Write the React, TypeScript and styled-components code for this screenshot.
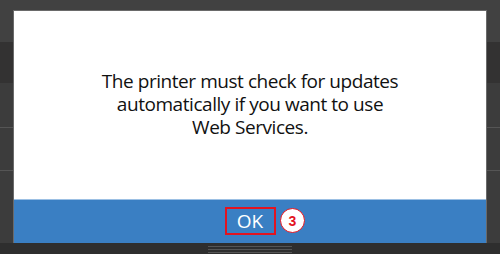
import React from "react";
import styled, { createGlobalStyle } from "styled-components";

const Global = createGlobalStyle`
  html, body { margin: 0; padding: 0; }
  body { width: 500px; height: 254px; overflow: hidden; background: #424242; font-family: "Open Sans", "Noto Sans", sans-serif; }
`;

const Screen = styled.div`
  position: relative;
  width: 500px;
  height: 254px;
  display: flex;
  flex-direction: column;
  background: #3d3d3d;
`;

const Band = styled.div<{ $h: number; $bg: string; $line?: boolean }>`
  height: ${(p) => p.$h}px;
  background: ${(p) => p.$bg};
  border-bottom: ${(p) => (p.$line ? "1px solid #555" : "none")};
  box-sizing: border-box;
`;

const Footer = styled.div`
  flex: 1;
  background: #2e2e2e;
  display: flex;
  justify-content: center;
  padding-top: 3px;
`;

const Grip = styled.div`
  width: 84px;
  display: flex;
  flex-direction: column;
  gap: 2px;
  span { height: 1px; background: #555; }
`;

const Dialog = styled.div`
  position: absolute;
  left: 13px;
  top: 10px;
  width: 474px;
  height: 233px;
  box-sizing: border-box;
  border: 1px solid #6a6a6a;
  border-bottom: none;
  display: flex;
  flex-direction: column;
  background: #fff;
`;

const Body = styled.div`
  flex: 1;
  display: flex;
  justify-content: center;
  padding-top: 59px;
  box-sizing: border-box;
`;

const Message = styled.p`
  margin: 0;
  text-align: center;
  color: #111;
  font-size: 19px;
  line-height: 23px;
  letter-spacing: -0.45px;
`;

const ActionBar = styled.div`
  height: 43px;
  background: #3a7fc3;
  border-top: 1px solid #9cc0e4;
  display: flex;
  justify-content: center;
  align-items: center;
  position: relative;
`;

const OkButton = styled.button`
  width: 51px;
  height: 28px;
  margin-top: -1px;
  box-sizing: border-box;
  border: 2px solid #e3141f;
  background: transparent;
  color: #fff;
  font-family: "Open Sans", "Noto Sans", sans-serif;
  font-size: 19px;
  padding: 0;
  display: flex;
  align-items: center;
  justify-content: center;
`;

const Badge = styled.div`
  position: absolute;
  left: 266px;
  top: 8px;
  width: 25px;
  height: 25px;
  box-sizing: border-box;
  border-radius: 50%;
  background: #fff;
  border: 1.5px solid #e3141f;
  color: #e3141f;
  font-family: "Liberation Sans", Arial, sans-serif;
  font-weight: bold;
  font-size: 14px;
  display: flex;
  align-items: center;
  justify-content: center;
`;

export default function App() {
  return (
    <>
      <Global />
      <Screen>
        <Band $h={42} $bg="#414141" />
        <Band $h={41} $bg="#333232" />
        <Band $h={45} $bg="#3c3c3c" $line />
        <Band $h={43} $bg="#3c3c3c" $line />
        <Band $h={72} $bg="#3c3c3c" />
        <Footer>
          <Grip>
            <span />
            <span />
            <span />
          </Grip>
        </Footer>
        <Dialog>
          <Body>
            <Message>
              The printer must check for updates
              <br />
              automatically if you want to use
              <br />
              Web Services.
            </Message>
          </Body>
          <ActionBar>
            <OkButton>OK</OkButton>
            <Badge>3</Badge>
          </ActionBar>
        </Dialog>
      </Screen>
    </>
  );
}
